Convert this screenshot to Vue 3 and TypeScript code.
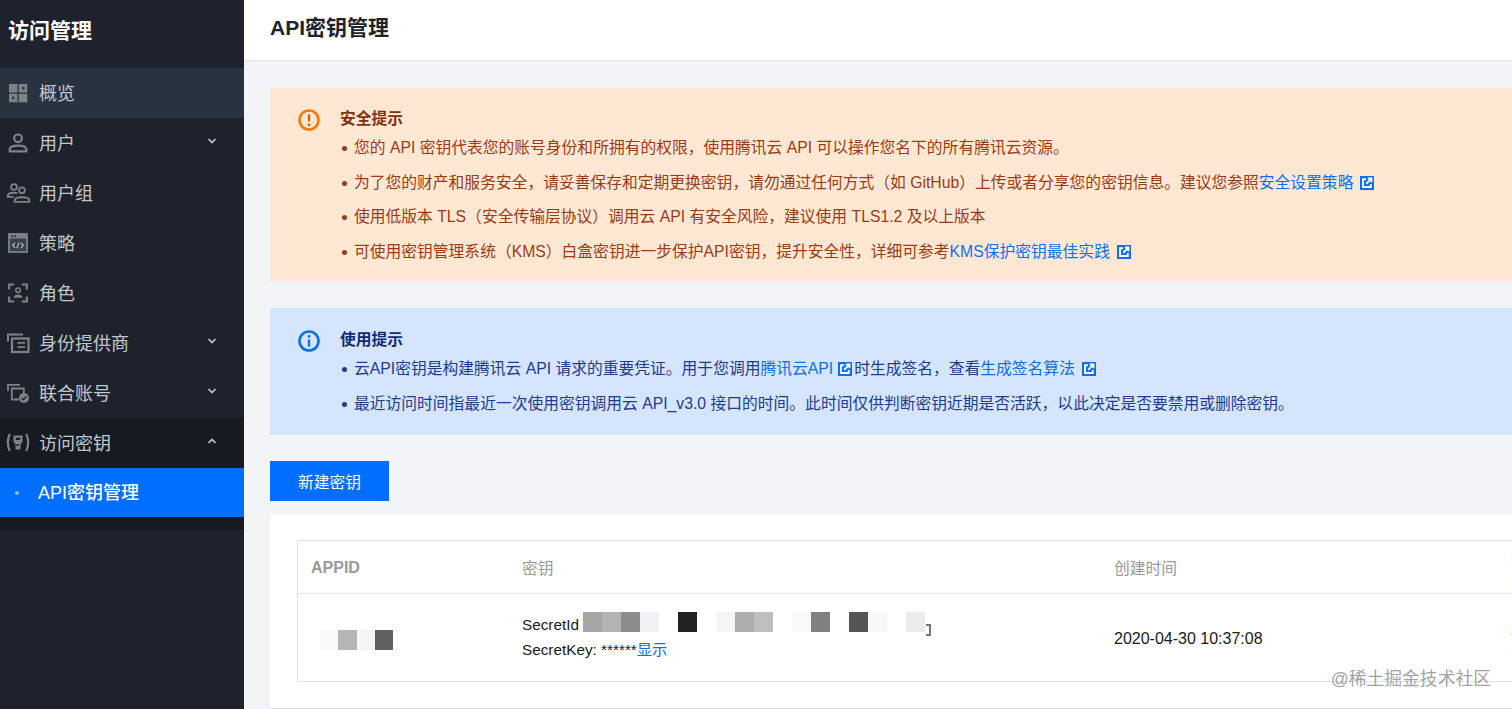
<template>
  <div class="page">
    <aside class="side">
      <div class="side-title">访问管理</div>
      <nav>
        <div
          v-for="item in menu"
          :key="item.label"
          class="menu-item"
          :class="{ active: item.active, open: item.open }"
        >
          <svg class="menu-icon" viewBox="0 0 20 20" aria-hidden="true">
            <template v-if="item.icon === 'grid'">
              <rect x="1" y="1" width="8.500" height="8.500" fill="currentColor" />
              <path fill-rule="evenodd" d="M10.800 1h8.500v8.500h-8.500zM14.200 4v2.400h2.400V4z" fill="currentColor" />
              <path fill-rule="evenodd" d="M1 10.800h8.500v8.500H1zM4 13.800v2.400h2.400v-2.400z" fill="currentColor" />
              <rect x="10.800" y="10.800" width="8.500" height="8.500" fill="currentColor" />
            </template>
            <template v-else-if="item.icon === 'user'">
              <circle cx="10" cy="5.300" r="3.800" fill="none" stroke="currentColor" stroke-width="2.200" />
              <path d="M1.600 18.300v-1.500c0-2.600 3.400-4.100 8.400-4.100s8.400 1.500 8.400 4.100v1.500z" fill="none" stroke="currentColor" stroke-width="2.200" stroke-linejoin="round" />
            </template>
            <template v-else-if="item.icon === 'group'">
              <circle cx="6" cy="4" r="2.900" fill="none" stroke="currentColor" stroke-width="1.900" />
              <circle cx="14" cy="7.300" r="2.900" fill="none" stroke="currentColor" stroke-width="1.900" />
              <path d="M5.500 13.900H-.2v-.8c0-2 2.700-3.300 6.200-3.300 1.200 0 2.400.2 3.300.5" fill="none" stroke="currentColor" stroke-width="1.900" />
              <path d="M6.600 18.900v-1.400c0-2 3-3.200 7.400-3.200s7.400 1.200 7.400 3.200v1.400z" fill="none" stroke="currentColor" stroke-width="1.900" />
            </template>
            <template v-else-if="item.icon === 'code'">
              <rect x="1" y="1" width="18" height="18" fill="#3a404b" stroke="currentColor" stroke-width="1.800" />
              <path d="M1 1h18v4.500H1z" fill="currentColor" />
              <path d="M3 3.200h1.800M6 3.200h1.800" stroke="#1e222d" stroke-width="1.500" />
              <path d="M7 9.800 4.600 12.300l2.400 2.500M13 9.800l2.400 2.500-2.400 2.500M11.200 9.400l-2.400 5.800" fill="none" stroke="#c3c7cc" stroke-width="1.100" />
            </template>
            <template v-else-if="item.icon === 'role'">
              <path d="M1.200 6.500V1.500h5M13.800 1.500h5v5M18.800 13.500v5h-5M6.200 18.500h-5v-5" fill="none" stroke="currentColor" stroke-width="2.200" />
              <circle cx="10" cy="7.300" r="2.200" fill="none" stroke="currentColor" stroke-width="1.500" />
              <path d="M5.500 14.800c.3-2.300 2.300-3.300 4.500-3.300s4.200 1 4.500 3.300z" fill="currentColor" />
            </template>
            <template v-else-if="item.icon === 'idp'">
              <path d="M0 8.500V1.500h15" fill="none" stroke="currentColor" stroke-width="2" />
              <rect x="4" y="5.500" width="16.500" height="13.500" fill="none" stroke="currentColor" stroke-width="2.200" />
              <path d="M9.500 9.800h7.500M9.500 14.200h7.500" stroke="currentColor" stroke-width="1.800" />
            </template>
            <template v-else-if="item.icon === 'fed'">
              <path d="M0 8V1.800h12" fill="none" stroke="currentColor" stroke-width="1.800" />
              <path d="M11 16.500H3.800V5.500h12v5" fill="none" stroke="currentColor" stroke-width="1.800" />
              <circle cx="16" cy="15" r="5" fill="currentColor" />
              <path d="M13.700 15l1.700 1.700 3-3.300" fill="none" stroke="#1e222d" stroke-width="1.400" />
            </template>
            <template v-else>
              <path d="M1.800 1C-.8 6 -.8 13 1.800 18M18.200 1c2.600 5 2.600 12 0 17" fill="none" stroke="currentColor" stroke-width="2.200" />
              <path fill-rule="evenodd" d="M5.500 2.500h9v6.800l-2 1.800v5.400H7.500v-5.400l-2-1.800zM7.800 4.800v2.200h4.400V4.800zM8.300 11.300h2.700v1.400H8.300z" fill="currentColor" />
            </template>
          </svg>
          <span class="menu-label">{{ item.label }}</span>
          <svg v-if="item.arrow" class="chevron" viewBox="0 0 10 6" aria-hidden="true">
            <path :d="item.open ? 'M1.500 5 5 1.500 8.500 5' : 'M1.500 1 5 4.500 8.500 1'" fill="none" stroke="currentColor" stroke-width="1.700" />
          </svg>
        </div>
        <div class="sub-menu">
          <div class="sub-item"><i class="sub-dot"></i><span class="menu-label">API密钥管理</span></div>
        </div>
      </nav>
    </aside>

    <main class="main">
      <header class="top">API密钥管理</header>
      <div class="content">
        <section class="alert warn">
          <svg class="alert-icon" viewBox="0 0 22 22" aria-hidden="true">
            <circle cx="11" cy="11" r="9.500" fill="none" stroke="currentColor" stroke-width="2.600" />
            <path d="M11 5.400v7" stroke="#d9590a" stroke-width="2.300" />
            <circle cx="11" cy="15.800" r="1.400" fill="#d9590a" />
          </svg>
          <div>
            <h4>安全提示</h4>
            <ul>
              <li>您的 API 密钥代表您的账号身份和所拥有的权限，使用腾讯云 API 可以操作您名下的所有腾讯云资源。</li>
              <li>
                为了您的财产和服务安全，请妥善保存和定期更换密钥，请勿通过任何方式（如 GitHub）上传或者分享您的密钥信息。建议您参照<a>安全设置策略</a>
                <svg class="ext" viewBox="0 0 13 13" aria-hidden="true">
                  <path d="M0 0h13v13H0z" fill="currentColor" />
                  <path d="M5.500 3H2.800v7.200H10V7.500M5.800 7.200l4.600-4.600M7.200 2.300h3.500v3.500" fill="none" stroke="#fff" stroke-width="1.700" />
                </svg>
              </li>
              <li>使用低版本 TLS（安全传输层协议）调用云 API 有安全风险，建议使用 TLS1.2 及以上版本</li>
              <li>
                可使用密钥管理系统（KMS）白盒密钥进一步保护API密钥，提升安全性，详细可参考<a>KMS保护密钥最佳实践</a>
                <svg class="ext" viewBox="0 0 13 13" aria-hidden="true">
                  <path d="M0 0h13v13H0z" fill="currentColor" />
                  <path d="M5.500 3H2.800v7.200H10V7.500M5.800 7.200l4.600-4.600M7.200 2.300h3.500v3.500" fill="none" stroke="#fff" stroke-width="1.700" />
                </svg>
              </li>
            </ul>
          </div>
        </section>

        <section class="alert info">
          <svg class="alert-icon" viewBox="0 0 22 22" aria-hidden="true">
            <circle cx="11" cy="11" r="9.500" fill="none" stroke="currentColor" stroke-width="2.600" />
            <circle cx="11" cy="6.400" r="1.400" fill="currentColor" />
            <path d="M11 9.500v7.200" stroke="currentColor" stroke-width="2.300" />
          </svg>
          <div>
            <h4>使用提示</h4>
            <ul>
              <li>
                云API密钥是构建腾讯云 API 请求的重要凭证。用于您调用<a>腾讯云API</a>
                <svg class="ext" viewBox="0 0 13 13" aria-hidden="true">
                  <path d="M0 0h13v13H0z" fill="currentColor" />
                  <path d="M5.500 3H2.800v7.200H10V7.500M5.800 7.200l4.600-4.600M7.200 2.300h3.500v3.500" fill="none" stroke="#fff" stroke-width="1.700" />
                </svg><span class="after-ext">时生成签名，查看</span><a>生成签名算法</a>
                <svg class="ext last" viewBox="0 0 13 13" aria-hidden="true">
                  <path d="M0 0h13v13H0z" fill="currentColor" />
                  <path d="M5.500 3H2.800v7.200H10V7.500M5.800 7.200l4.600-4.600M7.200 2.300h3.500v3.500" fill="none" stroke="#fff" stroke-width="1.700" />
                </svg>
              </li>
              <li>最近访问时间指最近一次使用密钥调用云 API_v3.0 接口的时间。此时间仅供判断密钥近期是否活跃，以此决定是否要禁用或删除密钥。</li>
            </ul>
          </div>
        </section>

        <button class="btn" type="button">新建密钥</button>

        <section class="card">
          <div class="table">
            <div class="row head">
              <div class="appid-head">APPID</div>
              <div>密钥</div>
              <div>创建时间</div>
              <div>最近访问时间</div>
            </div>
            <div class="row body">
              <div class="mosaic appid">
                <i v-for="(c, i) in appidCells" :key="i" :style="{ background: c }"></i>
              </div>
              <div class="secret">
                <div class="secret-id">
                  SecretId
                  <span class="mosaic">
                    <i v-for="(c, i) in secretCells" :key="i" :style="{ background: c }"></i>
                  </span>
                  <span class="copy-rest"></span>
                </div>
                <div>SecretKey: ******<a>显示</a></div>
              </div>
              <div class="time">2020-04-30 10:37:08</div>
              <div class="time">2020-04-30 10:37:08</div>
            </div>
          </div>
        </section>
      </div>
    </main>
    <div class="watermark">@稀土掘金技术社区</div>
  </div>
</template>

<script setup lang="ts">
type MenuIcon = 'grid' | 'user' | 'group' | 'code' | 'role' | 'idp' | 'fed' | 'key'

interface MenuItem {
  label: string
  icon: MenuIcon
  arrow?: boolean
  active?: boolean
  open?: boolean
}

const menu: MenuItem[] = [
  { label: '概览', icon: 'grid', active: true },
  { label: '用户', icon: 'user', arrow: true },
  { label: '用户组', icon: 'group' },
  { label: '策略', icon: 'code' },
  { label: '角色', icon: 'role' },
  { label: '身份提供商', icon: 'idp', arrow: true },
  { label: '联合账号', icon: 'fed', arrow: true },
  { label: '访问密钥', icon: 'key', arrow: true, open: true },
]

// 打码色块
const appidCells = ['#fafafa', '#b5b5b5', '#f5f5f6', '#606060']
const secretCells = [
  '#a5a5a5', '#b3b3b3', '#8c8c8c', '#f2f2f4', '#fff', '#222', '#fff', '#f5f5f6', '#adadad',
  '#bfbfbf', '#fff', '#f9f9f9', '#808080', '#fff', '#555', '#f8f8f8', '#fff', '#ebebeb',
]
</script>

<style>
html, body { margin: 0; background: #f3f4f7; }
</style>

<style scoped>
.page {
  position: relative;
  display: flex;
  width: 1512px;
  height: 709px;
  overflow: hidden;
  font-family: "Liberation Sans", "Noto Sans CJK SC", sans-serif;
  background: #f3f4f7;
}

.side { flex: 0 0 244px; background: #1e222d; color: #c3c7cc; }
.side-title {
  height: 68px;
  padding: 0 8px;
  line-height: 62px;
  box-sizing: border-box;
  font-size: 21px;
  font-weight: 700;
  color: #fff;
}
.menu-item {
  display: flex;
  align-items: center;
  height: 50px;
  padding: 0 27px 0 8px;
  font-size: 18px;
}
.menu-item.active { background: #293340; }
.menu-item.open { background: #171a23; }
.menu-label { margin-bottom: 3px; }
.menu-icon { flex: none; width: 20px; height: 20px; margin-right: 11px; color: #7d8388; overflow: visible; }
.chevron { width: 10px; height: 6px; margin: 0 0 4px auto; color: #c3c7cc; }
.sub-menu { background: #171a23; padding-bottom: 13px; }
.sub-item {
  display: flex;
  align-items: center;
  height: 49px;
  padding-left: 15px;
  background: #006eff;
  color: #fff;
  font-size: 18px;
  font-weight: 500;
}
.sub-dot { width: 4px; height: 4px; margin-right: 19px; background: #8db7ee; border-radius: 50%; }

.main { flex: 1; min-width: 0; overflow: hidden; }
.top {
  height: 61px;
  box-sizing: border-box;
  padding-left: 26px;
  line-height: 56px;
  background: #fff;
  border-bottom: 1px solid #e3e5ea;
  font-size: 21px;
  font-weight: 700;
  color: #1f2229;
}
.content { padding: 27px 0 0 26px; }

.alert { display: flex; font-size: 15.780px; }
.alert h4 { margin: 0 0 1px; font-size: 15.750px; line-height: 22px; font-weight: 700; }
.alert ul { margin: 0; padding: 0 0 0 14px; list-style: none; }
.alert li { position: relative; height: 34.500px; line-height: 34.500px; white-space: nowrap; }
.alert li::before {
  content: "";
  position: absolute;
  left: -12px;
  top: 15px;
  width: 5px;
  height: 5px;
  border-radius: 50%;
  background: currentColor;
}
.alert a { color: #0f6fe8; }
.alert-icon { flex: none; width: 22px; height: 22px; margin: 1px 20px 0 0; }
.warn { padding: 20px 0 12px 28px; background: #fee8d4; color: #9c3a14; }
.warn h4 { color: #84300a; }
.warn .alert-icon { color: #f57b0c; }
.info { margin-top: 27px; padding: 21px 0 14px 28px; background: #d4e5fd; color: #1e3b8f; }
.info h4 { color: #122a75; }
.info .alert-icon { color: #0f6fe8; }
.ext { width: 14px; height: 14px; margin-left: 7px; color: #0f6fe8; vertical-align: -2px; }
.info .ext { margin-left: 5px; }
.info .ext.last { margin-left: 7px; }
.after-ext { margin-left: 2px; }

.btn {
  display: block;
  width: 119px;
  height: 40px;
  margin-top: 26px;
  padding: 0;
  border: 0;
  background: #006eff;
  color: #fff;
  font: inherit;
  font-size: 15.750px;
}

.card {
  margin-top: 13px;
  height: 195px;
  box-sizing: border-box;
  padding: 26px 0 0 27px;
  background: #fff;
  border-bottom: 1px solid #dfe1e6;
}
.table { width: 1300px; border: 1px solid #e1e3e8; border-right: 0; }
.row { display: grid; grid-template-columns: 224px 592px 397px 1fr; align-items: center; }
.head { height: 53px; padding-top: 1px; box-sizing: border-box; border-bottom: 1px solid #e6e8ec; font-size: 15.750px; color: #999; }
.appid-head { padding-left: 13px; font-size: 16px; font-weight: 700; }
.body { height: 87px; font-size: 16px; color: #1a1a1a; }
.time { padding-top: 2px; }
.secret { font-size: 15.300px; line-height: 25.500px; }
.secret a { color: #0f6fe8; }
.secret-id { display: flex; align-items: center; gap: 4px; height: 25px; }
.mosaic { display: flex; }
.mosaic i { display: block; width: 19px; height: 20px; }
.secret-id .mosaic { margin: 0 0 6px; }
.appid { padding-left: 22px; margin-top: 5px; }
.appid i { width: 18.300px; }
.copy-rest { width: 5px; height: 12px; margin: 10px 0 0 -3px; border: solid #777; border-width: 2px 2px 2px 0; box-sizing: border-box; }

.watermark {
  position: absolute;
  right: 21px;
  bottom: 19px;
  font-size: 17.800px;
  line-height: 22px;
  color: rgba(120, 120, 120, 0.7);
}
</style>
